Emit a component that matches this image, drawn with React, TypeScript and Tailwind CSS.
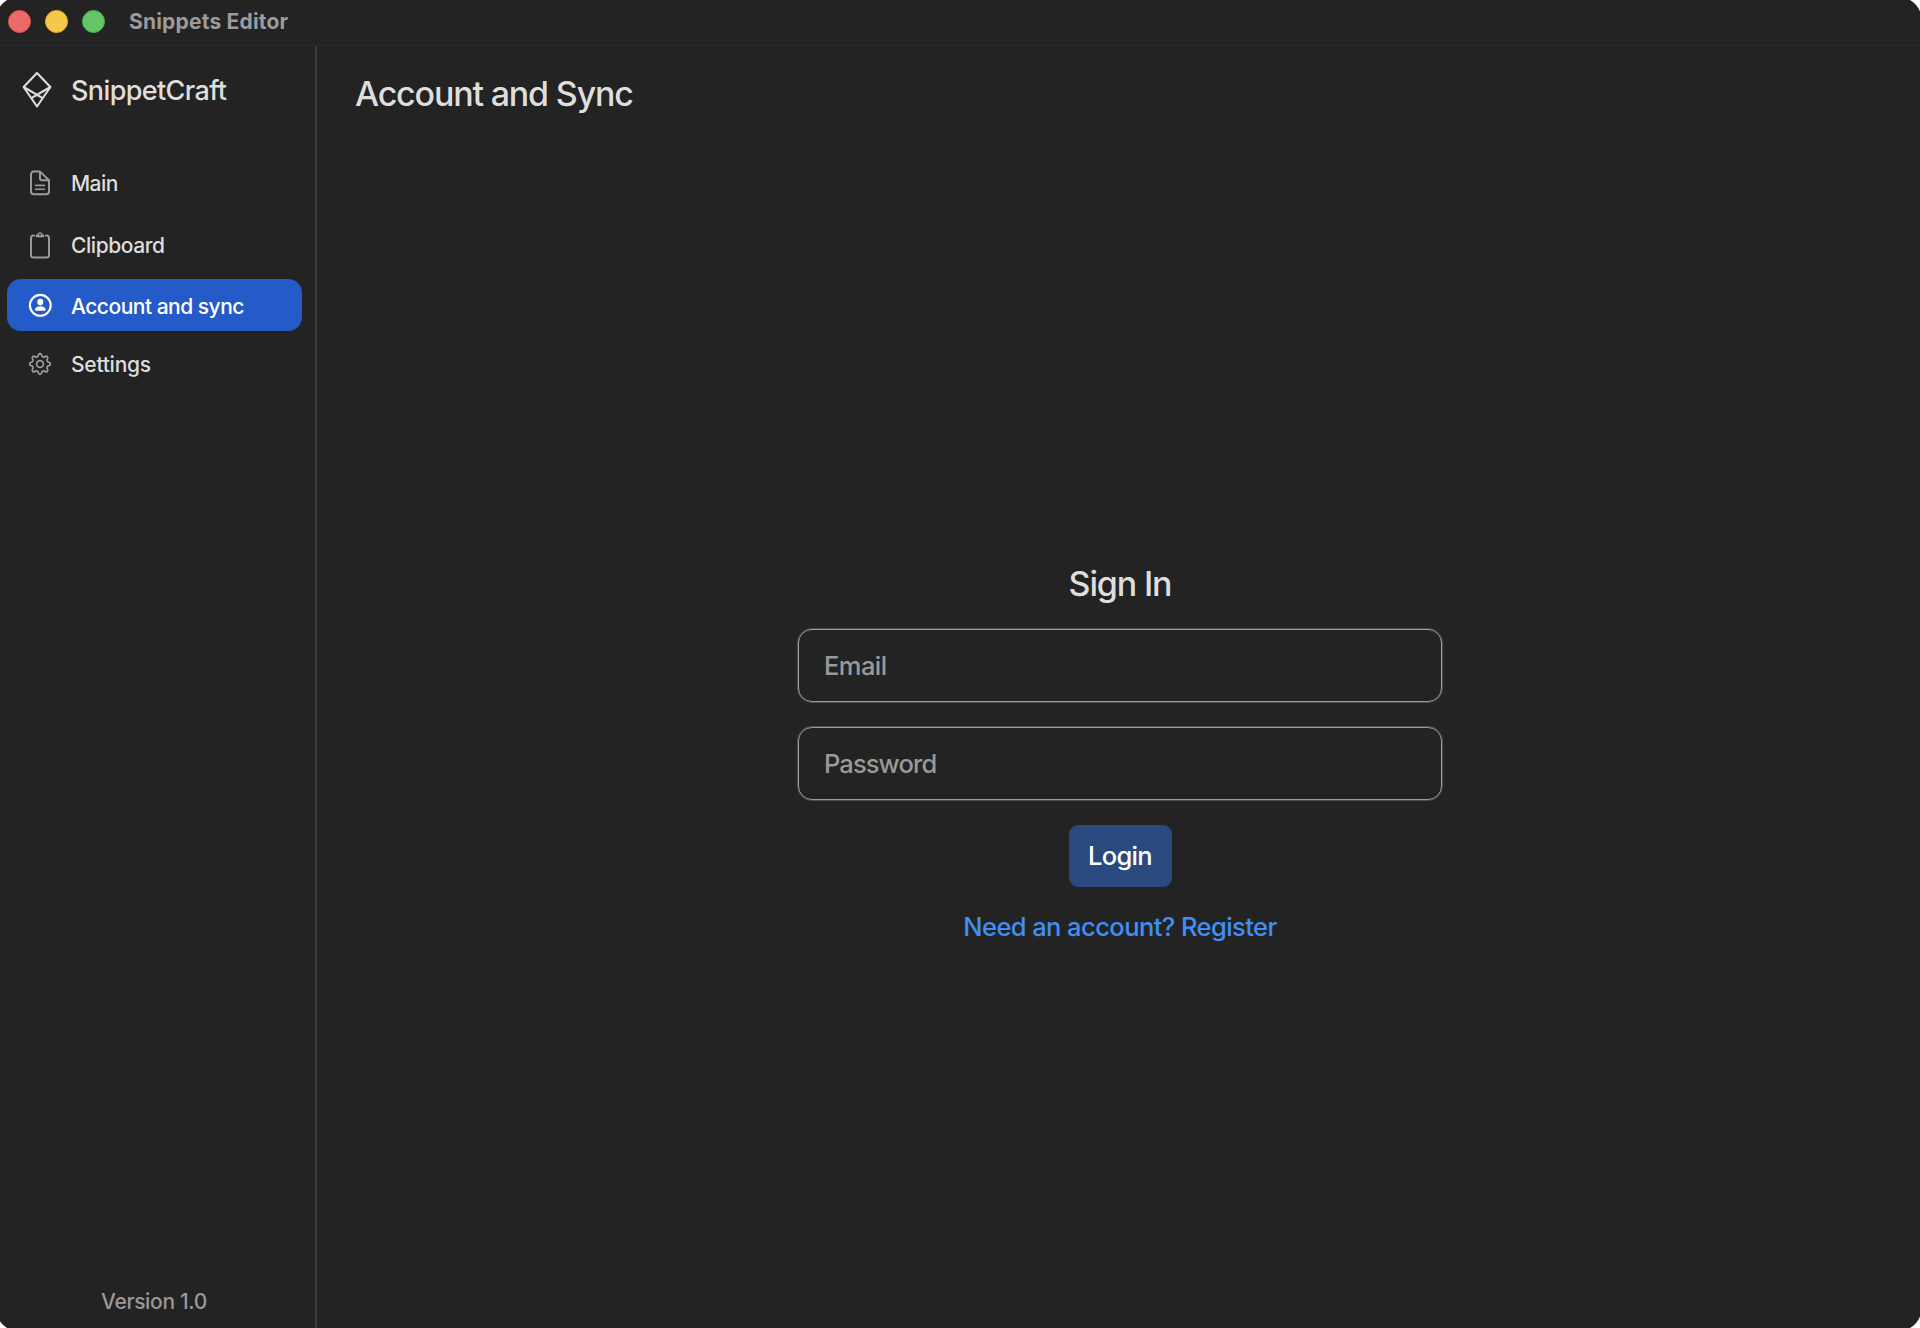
import type { ReactNode } from "react";

const DocIcon = () => (
  <svg className="h-[26px] w-[22px]" viewBox="0 0 22 26" fill="none" stroke="currentColor" strokeWidth="2" strokeLinejoin="round" strokeLinecap="round">
    <path d="M4.6 1.6H11L20 10.2V21.400a2.800 2.800 0 0 1-2.800 2.800H4.800A2.800 2.800 0 0 1 2 21.400V4.400A2.700 2.700 0 0 1 4.600 1.600Z" />
    <path d="M11 2v6.400a1.900 1.900 0 0 0 1.900 1.900H19.600" />
    <path d="M6.600 15.400h8.800M6.600 19.300h8.800" strokeWidth="1.600" />
  </svg>
);

const ClipboardIcon = () => (
  <svg className="h-[28px] w-[22px]" viewBox="0 0 22 28" fill="none" stroke="currentColor" strokeWidth="2" strokeLinecap="round">
    <path d="M5 4.400H4.400A2.500 2.500 0 0 0 2 7v17A2.500 2.500 0 0 0 4.500 26.500h13A2.500 2.500 0 0 0 20 24V7A2.500 2.500 0 0 0 17.600 4.400H17" />
    <path d="M6.800 6.300V4.500Q6.800 3.500 7.800 3.500H8.300A2.750 2.750 0 0 1 13.700 3.500H14.200Q15.200 3.500 15.200 4.500V6.300Z" fill="currentColor" stroke="none" />
    <circle cx="11" cy="3.500" r="1" fill="#232323" stroke="none" />
  </svg>
);

const PersonIcon = () => (
  <svg className="size-6" viewBox="0 0 24 24" fill="none">
    <circle cx="12.300" cy="12.300" r="10.400" stroke="currentColor" strokeWidth="2.100" />
    <ellipse cx="12.300" cy="9.100" rx="3" ry="3.300" fill="currentColor" />
    <path d="M6.900 16.600C7.300 14.300 9.600 13.200 12.300 13.200s5 1.100 5.400 3.400c.1.700-.300 1.100-1 1.100H7.900c-.700 0-1.100-.400-1-1.100Z" fill="currentColor" />
  </svg>
);

/* Eight rounded teeth around a ring */
const GearIcon = () => (
  <svg className="size-[26px]" viewBox="0 0 26 26" fill="none" stroke="currentColor" strokeWidth="1.900" strokeLinejoin="round">
    <circle cx="13" cy="13" r="3.700" />
    <path d="M11.300 3.300Q11.500 1.800 13 1.800T14.700 3.300Q14.900 4.800 16.200 5.300 17.500 5.800 18.700 4.900 19.900 4 20.900 5.100 22 6.100 21.100 7.300 20.200 8.500 20.700 9.800 21.200 11.100 22.700 11.300 24.200 11.500 24.200 13T22.700 14.700Q21.200 14.900 20.700 16.200 20.200 17.500 21.100 18.700 22 19.900 20.900 20.900 19.900 22 18.700 21.100 17.500 20.200 16.200 20.700 14.900 21.200 14.700 22.700 14.500 24.200 13 24.200T11.300 22.700Q11.100 21.200 9.800 20.700 8.500 20.200 7.300 21.100 6.100 22 5.100 20.900 4 19.900 4.900 18.700 5.800 17.500 5.300 16.200 4.800 14.900 3.300 14.700 1.800 14.500 1.800 13T3.300 11.300Q4.800 11.100 5.300 9.800 5.800 8.500 4.900 7.300 4 6.100 5.100 5.100 6.100 4 7.300 4.900 8.500 5.800 9.800 5.300 11.100 4.800 11.300 3.300Z" />
  </svg>
);

const Logo = () => (
  <svg className="h-[38px] w-[30px]" viewBox="0 0 30 38" fill="none" stroke="currentColor" strokeWidth="2.100" strokeLinejoin="round">
    <path d="M15 2 28.400 16 15 35.500 1.600 16Z" />
    <path d="M1.600 16 20.700 27.200M28.400 16 9.300 27.200" />
  </svg>
);

function NavItem({ icon, label, className, labelClass }: { icon: ReactNode; label: string; className: string; labelClass: string }) {
  return (
    <a href="#" className={`mr-[13px] ml-[7px] flex h-[52px] items-center rounded-[14px] text-[21px] font-medium leading-none ${className}`}>
      <span className="ml-[21px] flex w-6 shrink-0 justify-center">{icon}</span>
      <span className={`ml-[19px] whitespace-nowrap ${labelClass}`}>{label}</span>
    </a>
  );
}

function Field({ label, type, className }: { label: string; type: string; className: string }) {
  return (
    <input
      type={type}
      placeholder={label}
      className={`h-[73px] w-[644px] rounded-[14px] border border-[#9c9c9c] bg-transparent px-[25px] pb-[1px] text-[25.5px] font-[450] text-[#ddd] shadow-[0_0_0_1px_rgba(156,156,156,0.35)] outline-none placeholder:text-[#999] placeholder:opacity-100 ${className}`}
    />
  );
}

export default function App() {
  return (
    <div className="relative flex h-[1328px] w-[1920px] flex-col overflow-hidden bg-[#232323] font-['Inter',sans-serif] text-[#dedede]">
      <header className="flex h-[46px] shrink-0 items-center border-b border-[#2a2a2a] pb-[3px] pl-2">
        <div className="flex gap-[14px]">
          <i className="size-[23px] rounded-full border border-[#e2504e] bg-[#ee6a68]" />
          <i className="size-[23px] rounded-full border border-[#e0b030] bg-[#f4c84a]" />
          <i className="size-[23px] rounded-full border border-[#45b04b] bg-[#65c466]" />
        </div>
        <span className="ml-[24px] text-[21px] font-bold leading-none tracking-[0.2px] text-[#9b9b9b]">Snippets Editor</span>
      </header>

      <div className="flex min-h-0 flex-1">
        <aside className="flex w-[317px] shrink-0 flex-col border-r-2 border-[#3b3b3b]">
          <div className="mt-[25px] flex h-[38px] items-center pl-[22px]">
            <Logo />
            <span className="ml-[19px] text-[27px] font-[450] leading-none tracking-[-0.62px]">SnippetCraft</span>
          </div>
          <nav className="mt-[48px] flex flex-col">
            <NavItem icon={<DocIcon />} label="Main" className="[&_svg]:text-[#9a9a9a]" labelClass="tracking-[-0.55px]" />
            <NavItem icon={<ClipboardIcon />} label="Clipboard" className="mt-[10px] [&_svg]:text-[#9a9a9a]" labelClass="tracking-[-0.42px]" />
            <NavItem icon={<PersonIcon />} label="Account and sync" className="mt-[8px] bg-[#255bc8] text-white" labelClass="pt-[2px] tracking-[-0.5px]" />
            <NavItem icon={<GearIcon />} label="Settings" className="mt-[7px] [&_svg]:text-[#9a9a9a]" labelClass="pt-[1px] tracking-[-0.25px]" />
          </nav>
          <p className="mt-auto mb-[15px] pl-[101px] text-[21px] font-[450] leading-[22px] tracking-[-0.35px] text-[#999]">Version 1.0</p>
        </aside>

        <main className="flex flex-1 flex-col">
          <h1 className="mt-[28px] ml-[38px] text-[34px] font-[450] leading-[40px] tracking-[-1.18px]">Account and Sync</h1>
          <form className="mt-[450px] flex flex-col items-center pl-[3px]">
            <h2 className="text-[34px] font-[450] leading-[40px] tracking-[-1.15px]">Sign In</h2>
            <div className="mt-[25px] flex flex-col gap-[25px]">
              <Field label="Email" type="email" className="tracking-[-0.55px]" />
              <Field label="Password" type="password" className="tracking-[-0.9px]" />
            </div>
            <button type="button" className="mt-[25px] h-[62px] w-[103px] rounded-[9px] bg-[#2a497e] text-[25.5px] font-medium leading-none tracking-[-0.7px] text-white">
              Login
            </button>
            <a href="#" className="mt-[24px] text-[25.5px] font-[450] leading-[32px] tracking-[-0.57px] text-[#3f8ff5]">Need an account? Register</a>
          </form>
        </main>
      </div>

      <svg className="absolute top-0 left-0 size-3" viewBox="0 0 12 12" fill="#fff"><path d="M0 0H7Q3 2.500 0 6.500Z" /></svg>
      <svg className="absolute top-0 right-0 size-3" viewBox="0 0 12 12" fill="#fff"><path d="M12 0H2Q9 4 12 11.500Z" /></svg>
      <svg className="absolute bottom-0 left-0 size-3" viewBox="0 0 12 12" fill="#fff"><path d="M0 12H7Q3 9.500 0 5.500Z" /></svg>
      <svg className="absolute right-0 bottom-0 size-3" viewBox="0 0 12 12" fill="#fff"><path d="M12 12H2Q9 8 12 0.500Z" /></svg>
    </div>
  );
}
